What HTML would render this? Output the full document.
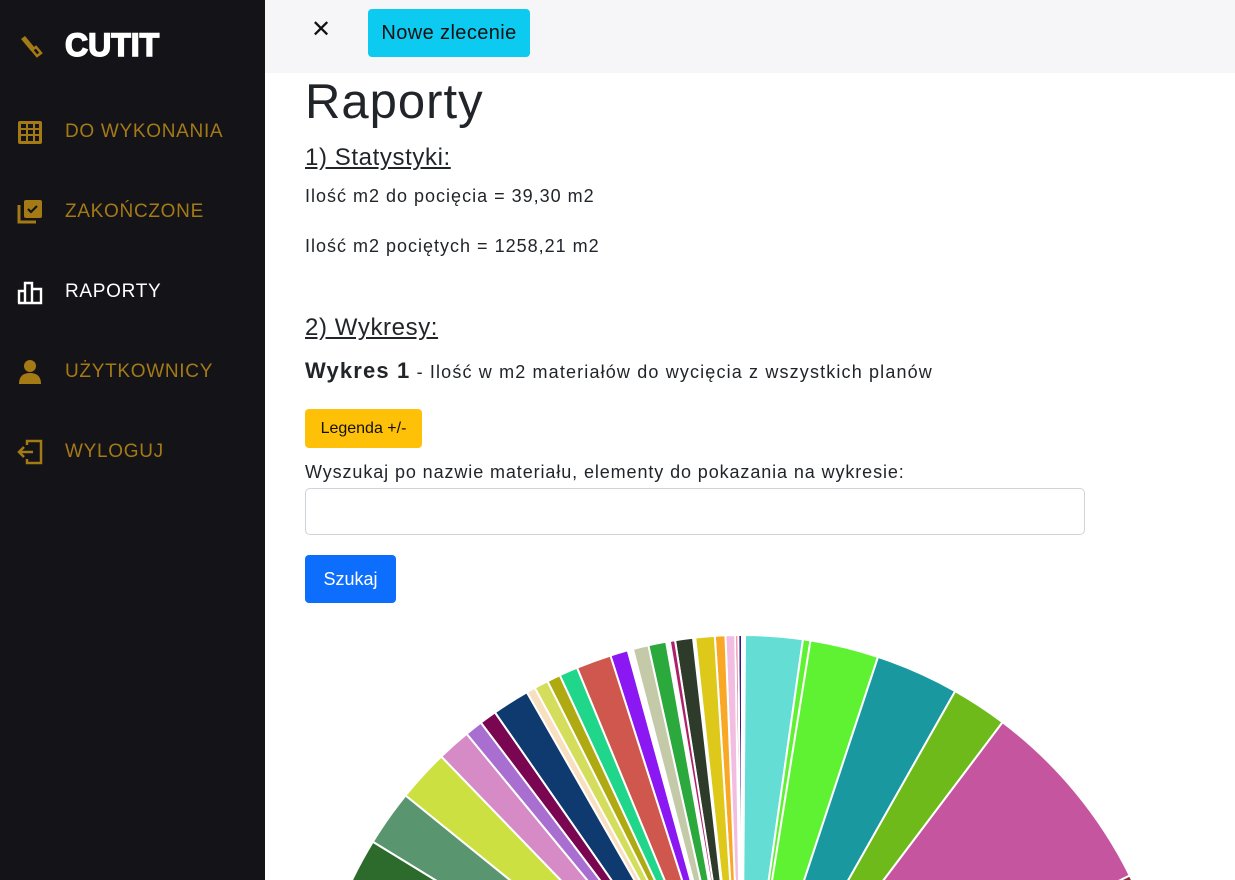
<!DOCTYPE html>
<html><head><meta charset="utf-8"><style>
*{margin:0;padding:0;box-sizing:border-box}
html,body{width:1235px;height:880px;overflow:hidden}
body{background:#fff;font-family:"Liberation Sans",sans-serif;color:#212529;position:relative}
.sb{position:absolute;left:0;top:0;width:265px;height:880px;background:#141318}
.logo{position:absolute;left:65px;top:27px;color:#fff;font-weight:900;font-size:32px;letter-spacing:0px;-webkit-text-stroke:1.5px #fff}
.nav{position:absolute;left:65px;font-size:19px;color:#a47a15;letter-spacing:0.7px}
.ic{position:absolute;left:17px}
.top{position:absolute;left:265px;top:0;width:970px;height:73px;background:#f6f6f9}
.btn{position:absolute;border-radius:4px}
.t{position:absolute;left:305px;white-space:nowrap}
</style></head><body>
<div class="sb">
<svg class="ic" style="top:33px" width="26" height="26" viewBox="0 0 26 26"><path d="M4 6 L8 3 L18 15 L14 18 Z" fill="#a47a15"/><path d="M15 17 L19 14 L24 20 L20 23 Z" fill="none" stroke="#a47a15" stroke-width="2.5"/></svg>
<div class="logo">CUTIT</div>
<svg class="ic" style="top:120px" width="26" height="26" viewBox="0 0 26 26"><rect x="1" y="1" width="24" height="23" rx="2" fill="#a47a15"/><g fill="#141318"><rect x="4" y="4" width="5" height="4"/><rect x="11" y="4" width="5" height="4"/><rect x="18" y="4" width="4" height="4"/><rect x="4" y="10" width="5" height="4"/><rect x="11" y="10" width="5" height="4"/><rect x="18" y="10" width="4" height="4"/><rect x="4" y="16" width="5" height="5"/><rect x="11" y="16" width="5" height="5"/><rect x="18" y="16" width="4" height="5"/></g></svg>
<div class="nav" style="top:121px">DO WYKONANIA</div>
<svg class="ic" style="top:199px" width="26" height="26" viewBox="0 0 26 26"><rect x="7" y="1" width="18" height="18" rx="2" fill="#a47a15"/><path d="M11 10 l3 3 l6 -6" stroke="#141318" stroke-width="2.2" fill="none"/><path d="M2 6 v17 h17" stroke="#a47a15" stroke-width="3" fill="none"/></svg>
<div class="nav" style="top:201px">ZAKOŃCZONE</div>
<svg class="ic" style="top:279px" width="26" height="26" viewBox="0 0 26 26"><path d="M2 24 V12 H8 V24 M8 24 V4 H15 V24 M15 24 V10 H24 V24 Z M1 24 H25" stroke="#fff" stroke-width="2.4" fill="none"/></svg>
<div class="nav" style="top:281px;color:#fff">RAPORTY</div>
<svg class="ic" style="top:359px" width="26" height="26" viewBox="0 0 26 26"><circle cx="13" cy="7" r="6" fill="#a47a15"/><path d="M2 25 Q2 14 13 14 Q24 14 24 25 Z" fill="#a47a15"/></svg>
<div class="nav" style="top:361px">UŻYTKOWNICY</div>
<svg class="ic" style="top:439px" width="26" height="26" viewBox="0 0 26 26"><path d="M10 6 V2 H24 V24 H10 V20" stroke="#a47a15" stroke-width="2.5" fill="none"/><path d="M2 13 H16 M7 8 L2 13 L7 18" stroke="#a47a15" stroke-width="2.5" fill="none"/></svg>
<div class="nav" style="top:441px">WYLOGUJ</div>
</div>
<div class="top"></div>
<div style="position:absolute;left:311px;top:15px;font-size:24px;color:#111">✕</div>
<div class="btn" style="left:368px;top:9px;width:162px;height:48px;background:#0dcaf0;font-size:20px;line-height:48px;text-align:center;color:#111;letter-spacing:0.4px">Nowe zlecenie</div>
<div class="t" style="top:74px;font-size:49px;letter-spacing:1px">Raporty</div>
<div class="t" style="top:144px;font-size:24px;text-decoration:underline;letter-spacing:0.6px">1) Statystyki:</div>
<div class="t" style="top:186px;font-size:18px;letter-spacing:1px">Ilość m2 do pocięcia = 39,30 m2</div>
<div class="t" style="top:236px;font-size:18px;letter-spacing:1px">Ilość m2 pociętych = 1258,21 m2</div>
<div class="t" style="top:314px;font-size:24px;text-decoration:underline;letter-spacing:0.6px">2) Wykresy:</div>
<div class="t" style="top:358px;font-size:18px;letter-spacing:1.15px"><b style="font-size:22px">Wykres 1</b> - Ilość w m2 materiałów do wycięcia z wszystkich planów</div>
<div class="btn" style="left:305px;top:409px;width:117px;height:39px;background:#ffc107;font-size:16px;line-height:39px;text-align:center;color:#111">Legenda +/-</div>
<div class="t" style="top:462px;font-size:18px;letter-spacing:0.9px">Wyszukaj po nazwie materiału, elementy do pokazania na wykresie:</div>
<div style="position:absolute;left:305px;top:488px;width:780px;height:47px;border:1px solid #ced4da;border-radius:5px"></div>
<div class="btn" style="left:305px;top:555px;width:91px;height:48px;background:#0d6efd;color:#fff;font-size:18px;line-height:48px;text-align:center">Szukaj</div>
<svg id="pie" style="position:absolute;left:0;top:0" width="1235" height="880"></svg>
<script>
var s=[[0.4,8.1,"#64ddd5"],[8.1,9.1,"#5ff233"],[9.1,18.3,"#5ff233"],[18.3,29.5,"#1a98a0"],[29.5,37,"#6fba1b"],[37,63.6,"#c5559f"],[63.6,80,"#8a2a36"],
[-0.5,0,"#3a1a8a"],[-0.9,-0.5,"#e05a7a"],[-2.2,-0.9,"#f2bde0"],[-3.6,-2.2,"#f9a826"],[-6.2,-3.6,"#dec91a"],[-8.9,-6.5,"#2e3b2b"],[-9.6,-8.9,"#b0206a"],[-12.5,-10.1,"#2ca93d"],[-14.6,-12.5,"#c4c9a8"],[-17.7,-15.3,"#8b18f2"],[-22.4,-17.7,"#d0574e"],[-24.9,-22.4,"#1fd68a"],[-26.7,-24.9,"#b0aa12"],[-28.6,-26.7,"#d4de5c"],[-29.8,-28.6,"#f8dfc0"],[-34.8,-29.8,"#0f3a70"],[-37.1,-34.8,"#7a0550"],[-39.5,-37.1,"#a86ed0"],[-44,-39.5,"#d68ac6"],[-51,-44,"#cde042"],[-58.5,-51,"#599670"],[-65,-58.5,"#2c6b2c"],[-80,-65,"#9b6fd0"]];
var cx=742,cy=1068,r=433,h="";
function p(a){a=a*Math.PI/180;return (cx+r*Math.sin(a)).toFixed(1)+","+(cy-r*Math.cos(a)).toFixed(1)}
s.forEach(function(d){h+='<path d="M'+cx+','+cy+' L'+p(d[0])+' A'+r+','+r+' 0 0 1 '+p(d[1])+' Z" fill="'+d[2]+'" stroke="#fff" stroke-width="2"/>'});
document.getElementById("pie").innerHTML=h;
</script>
</body></html>
